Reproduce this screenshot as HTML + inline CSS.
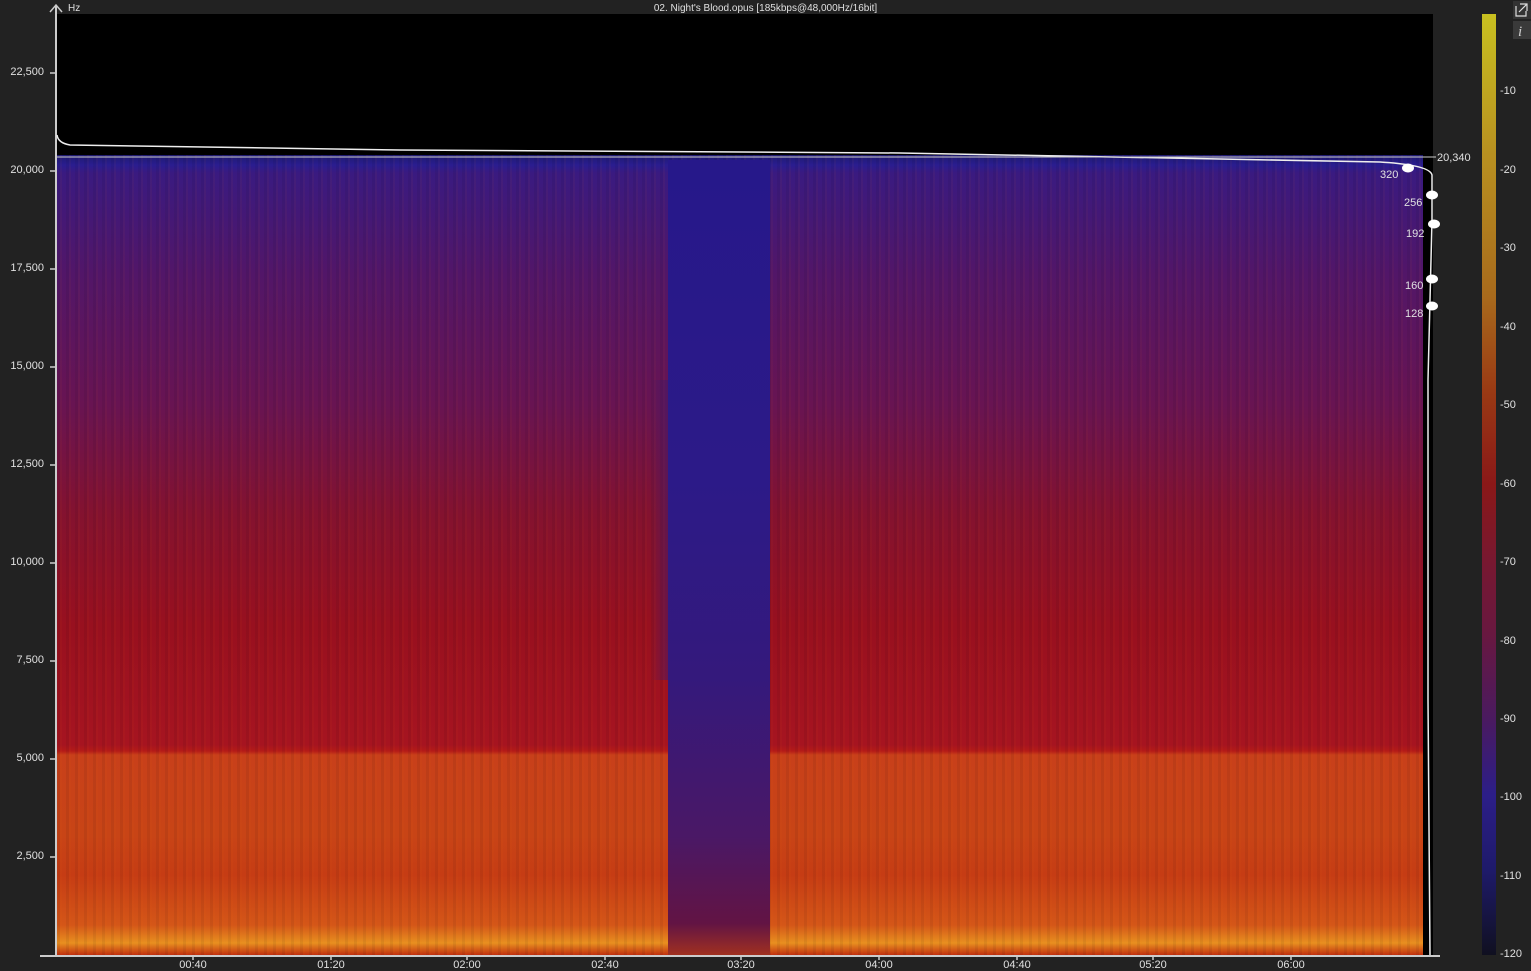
<!DOCTYPE html>
<html><head><meta charset="utf-8"><style>
body{margin:0;width:1531px;height:967px;background:#222;position:relative;overflow:hidden;font-family:"Liberation Sans",sans-serif;color:#ddd}
.a{position:absolute}
.yl{position:absolute;right:1487px;font-size:11px;color:#e0e0e0;text-align:right}
.xl{position:absolute;top:959px;font-size:11px;color:#e0e0e0;width:60px;margin-left:-30px;text-align:center}
.cl{position:absolute;left:1500px;font-size:11px;color:#e0e0e0}
</style></head><body>
<div class="a" style="left:57px;top:14px;width:1376px;height:941px;background:#000"></div>
<div class="a" style="left:57px;top:155px;width:1366px;height:800px;background:linear-gradient(#1e1a70 0px,#2a1d90 10px,#3a1a80 18px,#521668 120px,#681452 250px,#84122f 360px,#98101f 470px,#a61420 590px,#b41a18 596px,#c8401a 600px,#c84416 680px,#c63c14 720px,#d45618 770px,#e89020 788px,#c03010 800px)"></div>
<div class="a" style="left:57px;top:155px;width:1366px;height:800px;background:repeating-linear-gradient(90deg,rgba(0,0,0,0.06) 0 3px,rgba(255,120,0,0.04) 3px 5px,rgba(0,0,0,0) 5px 9px);"></div>
<div class="a" style="left:668px;top:160px;width:102px;height:795px;background:linear-gradient(#26188a 0%,#2c1a88 40%,#34197c 65%,#4a1866 85%,#621444 96%,#a03020 100%)"></div>
<div class="a" style="left:650px;top:380px;width:18px;height:300px;background:linear-gradient(90deg,rgba(120,20,60,0),rgba(60,25,110,0.5))"></div>
<div class="a" style="left:1423px;top:170px;width:10px;height:785px;background:#000"></div>
<div class="a" style="left:55px;top:6px;width:2px;height:950px;background:#ccc"></div>
<div class="a" style="left:40px;top:955px;width:1400px;height:2px;background:#ccc"></div>
<div class="a" style="left:68px;top:3px;font-size:10px;color:#e0e0e0">Hz</div>
<div class="a" style="left:0;width:1531px;top:3px;font-size:10px;text-align:center;color:#e0e0e0">02. Night's Blood.opus [185kbps@48,000Hz/16bit]</div>
<div class="yl" style="top:66px">22,500</div>
<div class="yl" style="top:164px">20,000</div>
<div class="yl" style="top:262px">17,500</div>
<div class="yl" style="top:360px">15,000</div>
<div class="yl" style="top:458px">12,500</div>
<div class="yl" style="top:556px">10,000</div>
<div class="yl" style="top:654px">7,500</div>
<div class="yl" style="top:752px">5,000</div>
<div class="yl" style="top:850px">2,500</div>
<div class="xl" style="left:193px">00:40</div>
<div class="xl" style="left:331px">01:20</div>
<div class="xl" style="left:467px">02:00</div>
<div class="xl" style="left:605px">02:40</div>
<div class="xl" style="left:741px">03:20</div>
<div class="xl" style="left:879px">04:00</div>
<div class="xl" style="left:1017px">04:40</div>
<div class="xl" style="left:1153px">05:20</div>
<div class="xl" style="left:1291px">06:00</div>
<svg class="a" style="left:0;top:0" width="1531" height="967">
<g stroke="#ccc" stroke-width="1.5" fill="none">
<path d="M50 12 L56 5 L62 12"/>
<path d="M50 73h6M50 171h6M50 269h6M50 367h6M50 465h6M50 563h6M50 661h6M50 759h6M50 857h6"/>
<path d="M193 955v5M331 955v5M467 955v5M605 955v5M741 955v5M879 955v5M1017 955v5M1153 955v5M1291 955v5"/>
</g>
<path d="M57 135 Q58 143 70 145 L400 150 L900 153 L1380 162 Q1430 165 1432 175 L1432 220 L1428 380 L1428 700 L1430 955" stroke="#eee" stroke-width="1.5" fill="none"/>
<path d="M57 157 H1436" stroke="#ccc" stroke-width="1"/>
<g fill="#fff"><ellipse cx="1408" cy="168" rx="6" ry="4.5"/><ellipse cx="1432" cy="195" rx="6" ry="4.5"/><ellipse cx="1434" cy="224" rx="6" ry="4.5"/><ellipse cx="1432" cy="279" rx="6" ry="4.5"/><ellipse cx="1432" cy="306" rx="6" ry="4.5"/></g>
<g fill="#e0e0e0" font-size="11" font-family="Liberation Sans"><text x="1437" y="161">20,340</text><text x="1380" y="178">320</text><text x="1404" y="206">256</text><text x="1406" y="237">192</text><text x="1405" y="289">160</text><text x="1405" y="317">128</text></g>
<rect x="1513" y="1" width="18" height="18" fill="#333"/><path d="M1516 6v10h10v-5M1520 4h7v7M1527 4l-8 8" stroke="#ddd" stroke-width="1.2" fill="none"/>
<rect x="1513" y="21" width="18" height="18" fill="#3a3a3a"/><text x="1518" y="36" font-size="15" font-style="italic" font-family="Liberation Serif" fill="#ccc">i</text>
</svg>
<div class="a" style="left:1482px;top:14px;width:14px;height:941px;background:linear-gradient(#c8c020 0%,#b89020 15%,#a86a1c 30%,#9a3a14 40%,#8a1818 50%,#781830 58%,#681840 66%,#4a1a60 75%,#2c1e88 83%,#1e1a6a 91%,#101020 100%)"></div>
<div class="cl" style="top:85px">-10</div><div class="cl" style="top:164px">-20</div><div class="cl" style="top:242px">-30</div><div class="cl" style="top:321px">-40</div><div class="cl" style="top:399px">-50</div><div class="cl" style="top:478px">-60</div><div class="cl" style="top:556px">-70</div><div class="cl" style="top:635px">-80</div><div class="cl" style="top:713px">-90</div><div class="cl" style="top:791px">-100</div><div class="cl" style="top:870px">-110</div><div class="cl" style="top:948px">-120</div>
</body></html>
